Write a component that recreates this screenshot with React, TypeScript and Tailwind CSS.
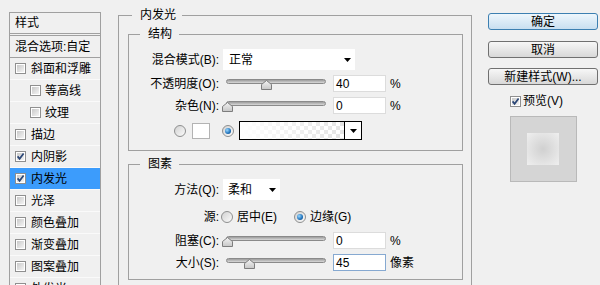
import React from 'react';

const effects = [
  { name: '斜面和浮雕', sub: false, on: false },
  { name: '等高线', sub: true, on: false },
  { name: '纹理', sub: true, on: false },
  { name: '描边', sub: false, on: false },
  { name: '内阴影', sub: false, on: true },
  { name: '内发光', sub: false, on: true, active: true },
  { name: '光泽', sub: false, on: false },
  { name: '颜色叠加', sub: false, on: false },
  { name: '渐变叠加', sub: false, on: false },
  { name: '图案叠加', sub: false, on: false },
  { name: '外发光', sub: false, on: false },
];

function Check({ on }: { on?: boolean }) {
  return (
    <span className="relative flex h-[11px] w-[11px] shrink-0 items-center justify-center border border-[#8f8f8f] bg-white">
      <span className="h-[7px] w-[7px] bg-linear-to-br from-[#c9c9c9] to-[#f4f4f4]" />
      {on && (
        <svg className="absolute left-0 top-0" width="9" height="9" viewBox="0 0 9 9">
          <path d="M1.6 4.4 L3.6 6.8 L7.6 1.6" fill="none" stroke="#2b4676" strokeWidth="1.7" />
        </svg>
      )}
    </span>
  );
}

function Radio({ on }: { on?: boolean }) {
  return (
    <span className="flex h-[12px] w-[12px] shrink-0 items-center justify-center rounded-full border border-[#8e8f8f] bg-linear-to-br from-[#d2d2d2] to-[#fbfbfb]">
      {on && (
        <span className="h-[6px] w-[6px] rounded-full bg-[radial-gradient(circle_at_35%_35%,#9ad8ff,#1f72bb_60%,#0e3d70)]" />
      )}
    </span>
  );
}

function Arrow() {
  return (
    <svg width="7" height="4" viewBox="0 0 7 4">
      <polygon points="0,0 7,0 3.5,4" fill="#000" />
    </svg>
  );
}

function Slider({ pos }: { pos: number }) {
  return (
    <div className="relative ml-[2px] h-[17px] w-[106px] shrink-0">
      <div className="absolute left-[5px] top-[4px] h-[5px] w-[100px] rounded-full border border-[#8a8a8a] bg-linear-to-b from-[#9c9c9c] to-[#d9d9d9]" />
      <svg className="absolute top-[5px]" style={{ left: pos - 5.5 }} width="11" height="10" viewBox="0 0 11 10">
        <defs>
          <linearGradient id="thumb" x1="0" y1="0" x2="0" y2="1">
            <stop offset="0" stopColor="#f4f4f4" />
            <stop offset="1" stopColor="#c6c6c6" />
          </linearGradient>
        </defs>
        <polygon points="5.5,0.5 10.5,4.5 10.5,9.5 0.5,9.5 0.5,4.5" fill="url(#thumb)" stroke="#7d7d7d" />
      </svg>
    </div>
  );
}

function Field({ value, focus }: { value: string; focus?: boolean }) {
  return (
    <div
      className={`ml-[6px] flex h-[17px] w-[53px] shrink-0 items-center border bg-white pl-[2px] ${
        focus ? 'border-[#86a9d1]' : 'border-[#dcdcdc]'
      }`}
    >
      {value}
    </div>
  );
}

function Label({ children }: { children: React.ReactNode }) {
  return <span className="w-[90px] shrink-0 text-right whitespace-nowrap">{children}</span>;
}

function Button({ children, primary }: { children: React.ReactNode; primary?: boolean }) {
  return (
    <div
      className={`flex h-[17px] items-center justify-center rounded-[3px] border whitespace-nowrap ${
        primary
          ? 'border-[#3c7fb1] bg-linear-to-b from-[#eef6fc] to-[#c8dff0]'
          : 'border-[#707070] bg-linear-to-b from-[#f7f7f7] to-[#d8d8d8]'
      }`}
    >
      {children}
    </div>
  );
}

export default function App() {
  return (
    <div className="flex h-[285px] w-[600px] overflow-hidden bg-[#f0f0f0] font-['Liberation_Sans','Noto_Sans_CJK_SC',sans-serif] text-[12px] leading-[16px] text-black">
      {/* Styles list */}
      <div className="ml-[9px] mt-[12px] flex h-[300px] w-[92px] shrink-0 flex-col border border-[#a0a0a0]">
        <div className="flex h-[21px] items-center border-b border-[#a0a0a0] pl-[5px]">样式</div>
        <div className="mt-[1px] flex h-[23px] items-center border-y border-[#a0a0a0] pl-[5px] whitespace-nowrap">
          混合选项:自定
        </div>
        {effects.map((e) => (
          <div
            key={e.name}
            className={`flex h-[22px] shrink-0 items-center border-b border-[#fafafa] whitespace-nowrap ${
              e.sub ? 'gap-[4px] pl-[20px]' : 'gap-[5px] pl-[5px]'
            } ${e.active ? 'bg-[#3c9cfc]' : ''}`}
          >
            <Check on={e.on} />
            <span>{e.name}</span>
          </div>
        ))}
      </div>

      {/* Inner glow settings */}
      <fieldset className="ml-[17px] mt-[7px] h-[300px] w-[354px] shrink-0 border border-[#a0a0a0]">
        <legend className="ml-[13px] pl-[8px] pr-[6px] leading-[16px]">内发光</legend>

        <fieldset className="ml-[9px] mr-[8px] mt-[3px] border border-[#a0a0a0] pb-[10px] pt-[7px]">
          <legend className="ml-[11px] pl-[8px] pr-[7px] leading-[16px]">结构</legend>
          <div className="flex h-[21px] items-center">
            <Label>混合模式(B):</Label>
            <div className="ml-[4px] flex h-[21px] w-[132px] items-center justify-between bg-white pl-[6px] pr-[4px]">
              <span>正常</span>
              <Arrow />
            </div>
          </div>
          <div className="mt-[5px] flex h-[17px] items-center">
            <Label>不透明度(O):</Label>
            <Slider pos={45} />
            <Field value="40" />
            <span className="ml-[4px]">%</span>
          </div>
          <div className="mt-[5px] flex h-[17px] items-center">
            <Label>杂色(N):</Label>
            <Slider pos={6} />
            <Field value="0" />
            <span className="ml-[4px]">%</span>
          </div>
          <div className="mt-[7px] flex h-[19px] items-center pl-[45px]">
            <Radio />
            <div className="ml-[6px] h-[16px] w-[18px] border border-[#b3b3b3] bg-white" />
            <div className="ml-[12px]">
              <Radio on />
            </div>
            <div className="ml-[5px] flex h-[19px] border border-black">
              <div className="h-full w-[104px] bg-[conic-gradient(#e4e4e4_25%,#ffffff_0_50%,#e4e4e4_0_75%,#ffffff_0)] bg-[length:8px_8px]">
                <div className="h-full w-full bg-linear-to-r from-white to-transparent" />
              </div>
              <div className="flex w-[17px] items-center justify-center border-l border-black bg-white">
                <Arrow />
              </div>
            </div>
          </div>
        </fieldset>

        <fieldset className="ml-[9px] mr-[8px] mt-[5px] border border-[#a0a0a0] pb-[8px] pt-[7px]">
          <legend className="ml-[11px] pl-[8px] pr-[7px] leading-[16px]">图素</legend>
          <div className="flex h-[21px] items-center">
            <Label>方法(Q):</Label>
            <div className="ml-[4px] flex h-[21px] w-[57px] items-center justify-between bg-white pl-[5px] pr-[4px]">
              <span>柔和</span>
              <Arrow />
            </div>
          </div>
          <div className="mt-[8px] flex h-[18px] items-center">
            <Label>源:</Label>
            <div className="ml-[2px] flex w-[73px] shrink-0 items-center">
              <Radio />
              <span className="ml-[4px] whitespace-nowrap">居中(E)</span>
            </div>
            <Radio on />
            <span className="ml-[4px] whitespace-nowrap">边缘(G)</span>
          </div>
          <div className="mt-[6px] flex h-[17px] items-center">
            <Label>阻塞(C):</Label>
            <Slider pos={6} />
            <Field value="0" />
            <span className="ml-[4px]">%</span>
          </div>
          <div className="mt-[5px] flex h-[17px] items-center">
            <Label>大小(S):</Label>
            <Slider pos={28} />
            <Field value="45" focus />
            <span className="ml-[4px]">像素</span>
          </div>
        </fieldset>
      </fieldset>

      {/* Buttons and preview */}
      <div className="ml-[16px] mt-[13px] flex w-[110px] shrink-0 flex-col">
        <Button primary>确定</Button>
        <div className="mt-[11px]">
          <Button>取消</Button>
        </div>
        <div className="mt-[10px]">
          <Button>新建样式(W)...</Button>
        </div>
        <div className="mt-[9px] flex h-[14px] items-center gap-[2px] pl-[22px]">
          <Check on />
          <span>预览(V)</span>
        </div>
        <div className="ml-[22px] mt-[8px] h-[66px] w-[67px] border border-[#b9b9b9] bg-[#d5d5d5] pl-[16px] pt-[16px]">
          <div className="h-[32px] w-[32px] bg-[radial-gradient(circle,#d0d0d0_0%,#dedede_45%,#efefef_100%)]" />
        </div>
      </div>
    </div>
  );
}
